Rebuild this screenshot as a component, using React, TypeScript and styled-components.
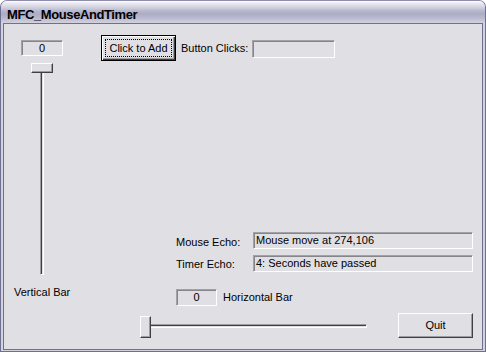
import React from "react";
import styled, { createGlobalStyle } from "styled-components";

const FACE = "#e0dfe3";
const UI_FONT = `"Liberation Sans", Arial, sans-serif`;

const Global = createGlobalStyle`
  html, body { margin: 0; padding: 0; background: #ffffff; }
  body { font-family: ${UI_FONT}; font-size: 11px; color: #000; }
  #root { width: 486px; height: 352px; }
`;

const Window = styled.div`
  box-sizing: border-box;
  width: 486px;
  height: 352px;
  display: flex;
  flex-direction: column;
  border: 1px solid #6f6f92;
  border-top-color: #8e8eac;
  border-radius: 7px 7px 0 0;
  background: #d3d3e0;
  overflow: hidden;
`;

const TitleBar = styled.div`
  flex: none;
  height: 22px;
  box-sizing: border-box;
  padding: 7px 0 0 6px;
  background: linear-gradient(
    to bottom,
    #ffffff 0px,
    #ebebf2 2px,
    #d4d4e2 6px,
    #b7b7cd 10px,
    #acacc6 13px,
    #b9b9cf 17px,
    #d2d2df 22px
  );
  font: bold 13px/13px ${UI_FONT};
  letter-spacing: -0.4px;
  color: #000;
  white-space: nowrap;
`;

const Client = styled.div`
  flex: 1;
  display: flex;
  flex-direction: column;
  margin: 0 2px 1px 2px;
  padding-top: 11px;
  border: 1px solid #6f6f92;
  background: ${FACE};
`;

const MainRow = styled.div`
  display: flex;
  align-items: flex-start;
`;

const LeftColumn = styled.div`
  flex: none;
  width: 97px;
  display: flex;
  flex-direction: column;
  align-items: flex-start;
`;

const RightColumn = styled.div`
  flex: 1;
  display: flex;
  flex-direction: column;
  align-items: flex-start;
`;

const Label = styled.span<{ $w?: number; $ml?: number; $mt?: number }>`
  display: block;
  flex: none;
  ${(p) => (p.$w ? `width: ${p.$w}px;` : "")}
  margin-left: ${(p) => p.$ml ?? 0}px;
  margin-top: ${(p) => p.$mt ?? 0}px;
  line-height: 13px;
  font-size: 11px;
  white-space: nowrap;
`;

const Field = styled.div<{ $w: number; $h: number; $center?: boolean; $ml?: number; $mt?: number }>`
  flex: none;
  box-sizing: border-box;
  width: ${(p) => p.$w}px;
  height: ${(p) => p.$h}px;
  margin-left: ${(p) => p.$ml ?? 0}px;
  margin-top: ${(p) => p.$mt ?? 0}px;
  display: flex;
  align-items: center;
  justify-content: ${(p) => (p.$center ? "center" : "flex-start")};
  padding: 0 2px;
  border: 1px solid;
  border-color: #a2a2a6 #ffffff #ffffff #a2a2a6;
  box-shadow: inset 1px 1px 0 #86868a;
  background: ${FACE};
  line-height: 13px;
  white-space: nowrap;
`;

const PushButton = styled.button<{ $default?: boolean; $w: number; $h: number; $ml?: number }>`
  flex: none;
  box-sizing: border-box;
  width: ${(p) => p.$w}px;
  height: ${(p) => p.$h}px;
  margin: 0 0 0 ${(p) => p.$ml ?? 0}px;
  padding: 3px;
  display: flex;
  align-items: stretch;
  justify-content: center;
  background: ${FACE};
  font: 11px/13px ${UI_FONT};
  color: #000;
  outline: none;
  cursor: default;
  ${(p) =>
    p.$default
      ? `
    border: 1px solid #000000;
    box-shadow: inset 1px 1px 0 #ffffff, inset -1px -1px 0 #404040, inset -2px -2px 0 #9d9da1;
  `
      : `
    border: 1px solid;
    border-color: #ffffff #404040 #404040 #ffffff;
    box-shadow: inset -1px -1px 0 #9d9da1;
  `}
`;

const FocusRect = styled.span`
  flex: 1;
  display: flex;
  align-items: center;
  justify-content: center;
  border: 1px dotted #000;
`;

const ButtonText = styled.span`
  display: flex;
  align-items: center;
`;

const TopRow = styled.div`
  display: flex;
  align-items: flex-start;
`;

const EchoGroup = styled.div`
  display: flex;
  flex-direction: column;
  gap: 6px;
  margin: 171px 0 0 75px;
`;

const EchoRow = styled.div`
  display: flex;
  align-items: flex-start;
`;

const HorizRow = styled.div`
  display: flex;
  align-items: center;
  margin: 17px 0 0 75px;
`;

const BottomRow = styled.div`
  display: flex;
  align-items: flex-start;
  margin: 7px 0 0 136px;
`;

const Slider = styled.div<{ $vertical?: boolean; $w: number; $h: number; $ml?: number; $mt?: number }>`
  position: relative;
  flex: none;
  width: ${(p) => p.$w}px;
  height: ${(p) => p.$h}px;
  margin-left: ${(p) => p.$ml ?? 0}px;
  margin-top: ${(p) => p.$mt ?? 0}px;
  display: flex;
  flex-direction: ${(p) => (p.$vertical ? "row" : "column")};
`;

const Channel = styled.div<{ $vertical?: boolean }>`
  box-sizing: border-box;
  ${(p) =>
    p.$vertical
      ? `width: 4px; height: 100%; margin-left: 9px;`
      : `height: 4px; width: 100%; margin-top: 8px;`}
  border: 1px solid;
  border-color: #9d9da1 #ffffff #ffffff #9d9da1;
  box-shadow: inset 1px 1px 0 #404040;
  background: ${FACE};
`;

const Thumb = styled.div<{ $w: number; $h: number }>`
  position: absolute;
  left: 0;
  top: 0;
  box-sizing: border-box;
  width: ${(p) => p.$w}px;
  height: ${(p) => p.$h}px;
  border: 1px solid;
  border-color: #ffffff #404040 #404040 #ffffff;
  box-shadow: inset -1px -1px 0 #9d9da1;
  background: ${FACE};
`;

export default function App() {
  return (
    <>
      <Global />
      <Window>
        <TitleBar>MFC_MouseAndTimer</TitleBar>
        <Client>
          <MainRow>
            <LeftColumn>
              <Field $w={42} $h={16} $center $ml={17} $mt={5}>
                0
              </Field>
              <Slider $vertical $w={22} $h={212} $ml={27} $mt={7}>
                <Channel $vertical />
                <Thumb $w={22} $h={10} />
              </Slider>
              <Label $ml={10} $mt={11}>
                Vertical Bar
              </Label>
            </LeftColumn>
            <RightColumn>
              <TopRow>
                <PushButton $default $w={75} $h={26}>
                  <FocusRect>Click to Add</FocusRect>
                </PushButton>
                <Label $w={71} $ml={5} $mt={7}>
                  Button Clicks:
                </Label>
                <Field $w={83} $h={18} $mt={5} />
              </TopRow>
              <EchoGroup>
                <EchoRow>
                  <Label $w={77} $mt={4}>
                    Mouse Echo:
                  </Label>
                  <Field $w={220} $h={17}>
                    Mouse move at 274,106
                  </Field>
                </EchoRow>
                <EchoRow>
                  <Label $w={77} $mt={3}>
                    Timer Echo:
                  </Label>
                  <Field $w={220} $h={17}>
                    4: Seconds have passed
                  </Field>
                </EchoRow>
              </EchoGroup>
              <HorizRow>
                <Field $w={41} $h={17} $center>
                  0
                </Field>
                <Label $ml={6}>Horizontal Bar</Label>
              </HorizRow>
            </RightColumn>
          </MainRow>
          <BottomRow>
            <Slider $w={227} $h={22} $mt={3}>
              <Channel />
              <Thumb $w={11} $h={22} />
            </Slider>
            <PushButton $w={75} $h={25} $ml={31}>
              <ButtonText>Quit</ButtonText>
            </PushButton>
          </BottomRow>
        </Client>
      </Window>
    </>
  );
}
